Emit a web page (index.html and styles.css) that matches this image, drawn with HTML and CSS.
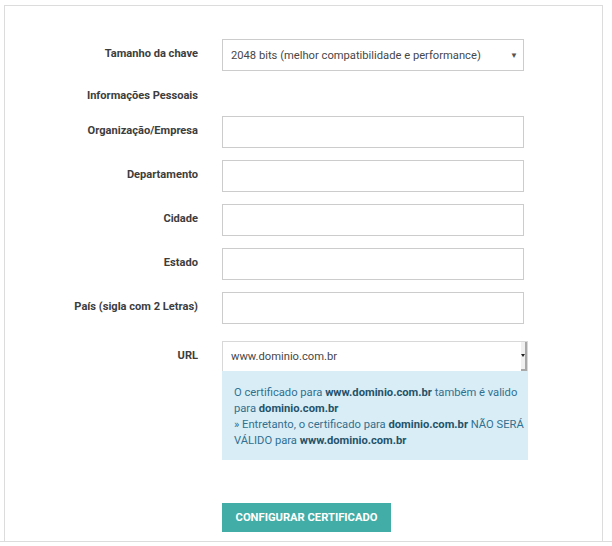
FILE: index.html
```html
<!DOCTYPE html>
<html lang="pt-BR">
<head>
<meta charset="utf-8">
<title>Configurar certificado</title>
<link rel="stylesheet" href="styles.css">
</head>
<body>
<div class="page">
  <div class="panel">
    <form class="form">
      <div class="row">
        <label class="label">Tamanho da chave</label>
        <div class="field">
          <div class="select">
            <span>2048 bits (melhor compatibilidade e performance)</span>
            <span class="caret">&#9660;</span>
          </div>
        </div>
      </div>

      <div class="row heading-row">
        <div class="label heading">Informações Pessoais</div>
      </div>

      <div class="row">
        <label class="label">Organização/Empresa</label>
        <div class="field"><div class="input"></div></div>
      </div>
      <div class="row">
        <label class="label">Departamento</label>
        <div class="field"><div class="input"></div></div>
      </div>
      <div class="row">
        <label class="label">Cidade</label>
        <div class="field"><div class="input"></div></div>
      </div>
      <div class="row">
        <label class="label">Estado</label>
        <div class="field"><div class="input"></div></div>
      </div>
      <div class="row">
        <label class="label">País (sigla com 2 Letras)</label>
        <div class="field"><div class="input"></div></div>
      </div>

      <div class="row url-row">
        <label class="label">URL</label>
        <div class="field url-field">
          <div class="url-select">
            <span>www.dominio.com.br</span>
            <span class="url-scroll"><span class="url-arrow"></span></span>
          </div>
          <div class="info">
            O certificado para <b>www.dominio.com.br</b> também é valido<br>
            para <b>dominio.com.br</b><br>
            » Entretanto, o certificado para <b>dominio.com.br</b> NÃO SERÁ<br>
            VÁLIDO para <b>www.dominio.com.br</b>
          </div>
        </div>
      </div>

      <div class="row button-row">
        <div class="label"></div>
        <div class="field">
          <button type="button" class="btn">CONFIGURAR CERTIFICADO</button>
        </div>
      </div>
    </form>
  </div>
</div>
</body>
</html>
```

FILE: styles.css
```css
* { box-sizing: border-box; }

html, body {
  margin: 0;
  padding: 0;
  background: #fff;
  font-family: Roboto, "Liberation Sans", Arial, sans-serif;
  color: #333;
}

.page {
  height: 542px;
  border-bottom: 1px solid #dcdcdc;
  padding-top: 5px;
}

.panel {
  margin-left: 4px;
  width: 599px;
  height: 536px;
  border: 1px solid #dcdcdc;
  border-bottom: none;
}

.form {
  padding-top: 33px;
}

.row {
  display: grid;
  grid-template-columns: 193px 302px;
  column-gap: 24px;
  margin-bottom: 12px;
}

.label {
  text-align: right;
  font-size: 11.1px;
  font-weight: 700;
  line-height: 17px;
  padding-top: 6px;
  color: #3d3d3d;
  white-space: nowrap;
}

.heading {
  padding-top: 4px;
}

.select {
  height: 32px;
  border: 1px solid #cccccc;
  display: flex;
  align-items: center;
  justify-content: space-between;
  padding: 0 5px 0 8px;
  font-size: 11.2px;
  color: #474747;
}

.caret {
  font-size: 8px;
  color: #555;
}

.input {
  height: 32px;
  border: 1px solid #cccccc;
  background: #fff;
}

.url-row {
  margin-top: 17px;
}

.url-field {
  width: 306px;
}

.url-select {
  height: 30px;
  border: 1px solid #d8d8d8;
  border-bottom: none;
  display: flex;
  align-items: center;
  justify-content: space-between;
  padding-left: 8px;
  font-size: 11.2px;
  color: #474747;
  background: #fff;
}

.url-scroll {
  width: 6px;
  height: 29px;
  background: #f0f0f0;
  border-right: 2px solid #a8a8a8;
  border-bottom: 2px solid #a8a8a8;
  position: relative;
}

.url-arrow {
  position: absolute;
  left: 0;
  top: 12px;
  width: 0;
  height: 0;
  border-left: 2px solid transparent;
  border-right: 2px solid transparent;
  border-top: 3px solid #222;
}

.info {
  background: #d9edf7;
  color: #31708f;
  font-size: 11.2px;
  line-height: 16px;
  padding: 14px 0 11px 12px;
  white-space: nowrap;
}

.info b {
  color: #245269;
  font-weight: 700;
}

.button-row {
  margin-top: 43px;
}

.btn {
  width: 169px;
  height: 29px;
  border: none;
  background: #42ada6;
  color: #fff;
  font-family: Roboto, "Liberation Sans", Arial, sans-serif;
  font-size: 11.2px;
  font-weight: 700;
  padding: 0;
  cursor: pointer;
}
```
